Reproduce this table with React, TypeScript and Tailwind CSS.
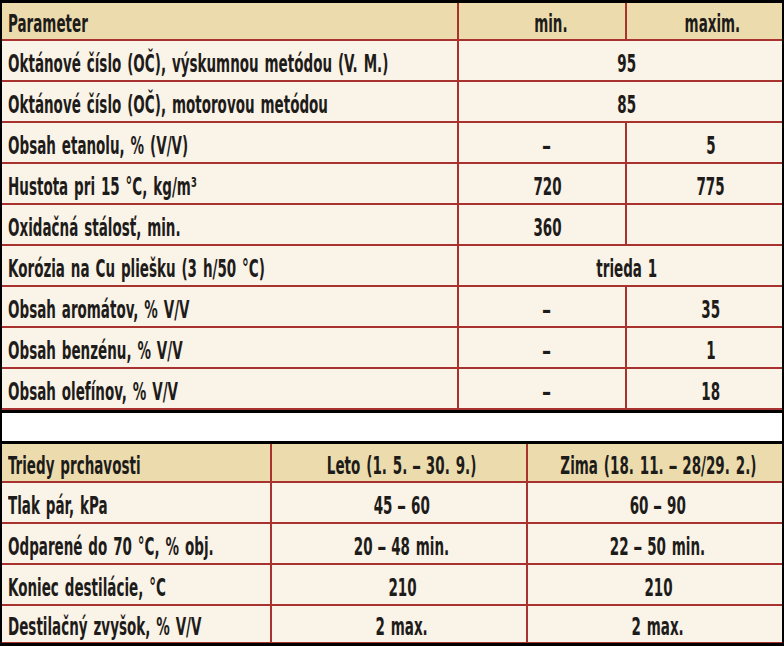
const font = "font-['DejaVu_Sans_Condensed','DejaVu_Sans',sans-serif]";

type Row = { label: string; min?: string; max?: string; span?: string };

const fuelRows: Row[] = [
  { label: "Oktánové číslo (OČ), výskumnou metódou (V. M.)", span: "95" },
  { label: "Oktánové číslo (OČ), motorovou metódou", span: "85" },
  { label: "Obsah etanolu, % (V/V)", min: "–", max: "5" },
  { label: "Hustota pri 15 °C, kg/m³", min: "720", max: "775" },
  { label: "Oxidačná stálosť, min.", min: "360", max: "" },
  { label: "Korózia na Cu pliešku (3 h/50 °C)", span: "trieda 1" },
  { label: "Obsah aromátov, % V/V", min: "–", max: "35" },
  { label: "Obsah benzénu, % V/V", min: "–", max: "1" },
  { label: "Obsah olefínov, % V/V", min: "–", max: "18" },
];

const volatilityRows = [
  { label: "Tlak pár, kPa", summer: "45 – 60", winter: "60 – 90" },
  { label: "Odparené do 70 °C, % obj.", summer: "20 – 48 min.", winter: "22 – 50 min." },
  { label: "Koniec destilácie, °C", summer: "210", winter: "210" },
  { label: "Destilačný zvyšok, % V/V", summer: "2 max.", winter: "2 max." },
];

const cell = "flex min-w-0 items-center border-b-2 border-[#a8322e] pt-[5px]";
const line = "border-r-2 border-[#a8322e]";

// en dash comes out too short once squeezed, so stretch it back
function withDash(text: string) {
  const parts = text.split("–");
  return parts.map((p, i) => (
    <span key={i}>
      {p}
      {i < parts.length - 1 && <span className="inline-block scale-x-[1.35]">–</span>}
    </span>
  ));
}

// the print uses a tall condensed face; squeeze the installed one to match
function Label({ children }: { children: string }) {
  return (
    <span className="inline-block shrink-0 origin-left scale-x-[0.6] whitespace-nowrap [word-spacing:2px]">
      {withDash(children)}
    </span>
  );
}

function Value({ children }: { children: string }) {
  return (
    <span className="inline-block shrink-0 origin-center scale-x-[0.6] whitespace-nowrap [word-spacing:2px]">
      {withDash(children)}
    </span>
  );
}

export default function App() {
  return (
    <div
      className={`w-[784px] h-[646px] overflow-hidden bg-black border-x-2 border-y-[3px] border-black text-[25px] font-bold leading-none text-[#1e1c1a] ${font}`}
    >
      <div className="grid grid-cols-[457px_168px_minmax(0,1fr)] bg-[#faf3e7]">
        <div className={`${cell} ${line} h-[38px] bg-[#ecdcad] pl-[6px]`}>
          <Label>Parameter</Label>
        </div>
        <div className={`${cell} ${line} h-[38px] bg-[#ecdcad] justify-center pl-[18px]`}>
          <Value>min.</Value>
        </div>
        <div className={`${cell} h-[38px] bg-[#ecdcad] justify-center pl-[16px]`}>
          <Value>maxim.</Value>
        </div>
        {fuelRows.map((r, i) => {
          const last = i === fuelRows.length - 1 ? "border-b-0" : "";
          return r.span !== undefined ? (
            <div key={r.label} className="contents">
              <div className={`${cell} ${line} ${last} h-[41px] pl-[6px]`}>
                <Label>{r.label}</Label>
              </div>
              <div className={`${cell} ${last} col-span-2 h-[41px] justify-center pl-[12px]`}>
                <Value>{r.span}</Value>
              </div>
            </div>
          ) : (
            <div key={r.label} className="contents">
              <div className={`${cell} ${line} ${last} h-[41px] pl-[6px]`}>
                <Label>{r.label}</Label>
              </div>
              <div className={`${cell} ${line} ${last} h-[41px] justify-center pl-[10px]`}>
                <Value>{r.min ?? ""}</Value>
              </div>
              <div className={`${cell} ${last} h-[41px] justify-center pl-[12px]`}>
                <Value>{r.max ?? ""}</Value>
              </div>
            </div>
          );
        })}
      </div>
      <div className="mt-[3px] h-[28px] bg-white" />
      <div className="mt-[3px] grid grid-cols-[270px_256px_minmax(0,1fr)] bg-[#faf3e7]">
        <div className={`${cell} ${line} h-[39px] bg-[#ecdcad] pl-[6px]`}>
          <Label>Triedy prchavosti</Label>
        </div>
        <div className={`${cell} ${line} h-[39px] bg-[#ecdcad] justify-center pl-[6px]`}>
          <Value>Leto (1. 5. – 30. 9.)</Value>
        </div>
        <div className={`${cell} h-[39px] bg-[#ecdcad] justify-center pl-[6px]`}>
          <Value>Zima (18. 11. – 28/29. 2.)</Value>
        </div>
        {volatilityRows.map((r, i) => {
          const last = i === volatilityRows.length - 1 ? "border-b-0 h-[38px]" : "h-[41px]";
          return (
            <div key={r.label} className="contents">
              <div className={`${cell} ${line} ${last} pl-[6px]`}>
                <Label>{r.label}</Label>
              </div>
              <div className={`${cell} ${line} ${last} justify-center pl-[6px]`}>
                <Value>{r.summer}</Value>
              </div>
              <div className={`${cell} ${last} justify-center pl-[6px]`}>
                <Value>{r.winter}</Value>
              </div>
            </div>
          );
        })}
      </div>
    </div>
  );
}
